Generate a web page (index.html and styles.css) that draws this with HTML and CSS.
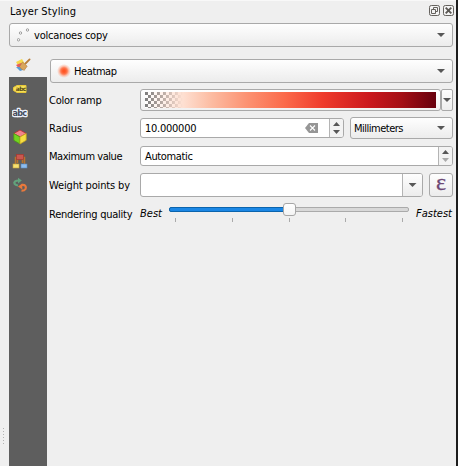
FILE: index.html
```
<!DOCTYPE html>
<html lang="en">
<head>
<meta charset="utf-8">
<title>Layer Styling</title>
<link rel="stylesheet" href="styles.css">
</head>
<body>
<div class="panel">
  <header class="titlebar">
    <h1 class="t-title">Layer Styling</h1>
    <svg class="winbtn" width="11" height="11" viewBox="0 0 11 11"><rect x=".5" y=".5" width="10" height="10" rx="1.8" fill="#f4f4f4" stroke="#65625e"/><path d="M4.5 4.5v-2h4v4h-2M2.5 4.5h4v4h-4z" fill="none" stroke="#65625e"/></svg>
    <svg class="winbtn" width="11" height="11" viewBox="0 0 11 11"><rect x=".5" y=".5" width="10" height="10" rx="1.8" fill="#f4f4f4" stroke="#65625e"/><path d="M2.7 2.7l5.6 5.6M8.3 2.7L2.7 8.3" stroke="#5b5854" stroke-width="1.9"/></svg>
  </header>
  <div class="combo layer">
    <svg class="points" width="14" height="14" viewBox="0 0 14 14" fill="#fff" stroke="#888" stroke-width=".8"><circle cx="3.5" cy="5" r="1.2"/><circle cx="10.500" cy="2" r="1.2"/><circle cx="1.500" cy="11.800" r="1.2"/></svg>
    <span class="t-layer">volcanoes copy</span><i class="arrow"></i>
  </div>
  <div class="body">
    <nav class="tabs">
      <div class="tab active"><svg width="16" height="16" viewBox="0 0 16 16"><path d="M1 5l6-3 3 5-6 3z" fill="#f6d84b"/><path d="M1 8l5-2 4 4-5 3z" fill="#e45c61"/><path d="M1 10l4 0 3 3-3 1z" fill="#5b9bd5"/><path d="M14.600 2.400L10.500 6.500" stroke="#b97e3b" stroke-width="1.800" stroke-linecap="round"/><path d="M7.500 5l4.700 4.200-3.200 4.300-1-1.300-.8.500-2.700-3z" fill="#d9a55c" stroke="#ae7a3b" stroke-width=".6"/></svg></div>
      <div class="tab"><svg width="16" height="16" viewBox="0 0 16 16"><path d="M5 4.500h9v7H5L1.500 9.500v-3z" fill="#f5df5a" stroke="#e8c837"/><text x="3.800" y="10" class="abc">abc</text></svg></div>
      <div class="tab"><svg width="16" height="16" viewBox="0 0 16 16"><text x=".6" y="10.800" class="abc halo">abc</text></svg></div>
      <div class="tab"><svg width="16" height="16" viewBox="0 0 16 16" stroke-width=".8" stroke-linejoin="round"><path d="M8 1l6.200 3.500L8 8 1.800 4.500z" fill="#f2848b" stroke="#c32832"/><path d="M1.800 4.500L8 8v7l-6.200-3.700z" fill="#73d321" stroke="#4c9a15"/><path d="M14.200 4.500L8 8v7l6.200-3.700z" fill="#f6de42" stroke="#c5a620"/></svg></div>
      <div class="tab"><svg width="16" height="16" viewBox="0 0 16 16"><path d="M5 4.500H3.500V11M11 4.500h1.500V11M5.500 6v4M10.500 6v4" fill="none" stroke="#b8742e" stroke-width="1.500"/><rect x="4.500" y="1.500" width="7" height="5" fill="#c9584f" stroke="#a9372f" stroke-width=".7"/><rect x="1" y="11" width="6" height="4" fill="#f6e173" stroke="#c6a638" stroke-width=".6"/><rect x="9" y="11" width="6" height="4" fill="#8dbdee" stroke="#5c8dc0" stroke-width=".6"/></svg></div>
      <div class="tab"><svg width="16" height="16" viewBox="0 0 16 16" fill="none"><path d="M6 8.500C2.500 8 1.500 6 3 4.500c1-1 2.500-1 4-1" stroke="#62a37c" stroke-width="2.200"/><path d="M6 .8L9.800 3.500 6 6.500z" fill="#62a37c"/><path d="M9.500 8c4-.5 5 1.500 4 4-1 1.500-2 1.800-4 1.700" stroke="#e8793c" stroke-width="2.200"/><path d="M10.300 6.500L6 9.500l4.300 3z" fill="#e8793c"/></svg></div>
    </nav>
    <main class="form">
      <div class="combo renderer"><i class="heat"></i><span class="t-heat">Heatmap</span><i class="arrow"></i></div>
      <div class="row ramp-row">
        <label class="t-ramp">Color ramp</label>
        <div class="ramp"><div class="ramp-fill"></div></div>
        <div class="ramp-menu"><i class="arrow"></i></div>
      </div>
      <div class="row radius-row">
        <label class="t-radius">Radius</label>
        <div class="field radius"><span class="t-num">10.000000</span>
          <svg class="clear" width="13" height="10" viewBox="0 0 13 10"><path d="M4 0h9v10H4L0 5z" fill="#969696"/><path d="M5 2.500l5 5M10 2.500l-5 5" stroke="#fff" stroke-width="1.100"/></svg>
          <div class="spin"><i class="up"></i><i class="down"></i></div></div>
        <div class="combo units"><span class="t-mm">Millimeters</span><i class="arrow"></i></div>
      </div>
      <div class="row max-row">
        <label class="t-max">Maximum value</label>
        <div class="field"><span class="t-auto">Automatic</span><div class="spin"><i class="up"></i><i class="down dim"></i></div></div>
      </div>
      <div class="row weight-row">
        <label class="t-weight">Weight points by</label>
        <div class="field weight"><div class="drop"><i class="arrow"></i></div></div>
        <div class="expr">ε</div>
      </div>
      <div class="row quality-row">
        <label class="t-quality">Rendering quality</label>
        <em class="t-best">Best</em>
        <div class="slider">
          <div class="track"><div class="done"></div><div class="knob"></div></div>
          <div class="ticks"><i></i><i></i><i></i><i></i><i></i></div>
        </div>
        <em class="t-fast">Fastest</em>
      </div>
    </main>
  </div>
  <div class="grip"></div>
</div>
</body>
</html>
```
FILE: styles.css
```
* { box-sizing: border-box; }
html, body { margin: 0; height: 466px; overflow: hidden; }
body { font: 11px/16px "DejaVu Sans Condensed", "DejaVu Sans", sans-serif; font-stretch: condensed; color: #000; background: #efefef; }
.panel { position: relative; display: flex; flex-direction: column; width: 458px; height: 466px; border-right: 2px solid #1d1d1d; background: #efefef; padding: 0 3px 0 9px; box-shadow: inset 0 1px #f8f8f8; }
.titlebar { display: flex; align-items: center; height: 23px; padding: 0 0 2px 1px; gap: 3px; }
h1 { flex: 1; margin: 0; padding-top: 2px; font: inherit; }
.winbtn { flex: none; }
.titlebar .winbtn:last-child { margin-right: -1px; }
span, label, em, h1 { white-space: nowrap; }
.t-title { letter-spacing: .1px; }
.t-layer { letter-spacing: -.2px; }
.t-heat { letter-spacing: -.4px; }
.t-ramp, .t-num, .t-quality { letter-spacing: -.25px; }
.t-mm { letter-spacing: -.5px; }
.t-max { letter-spacing: -.45px; }
.t-weight { letter-spacing: -.15px; }
.t-auto { letter-spacing: -.35px; }
.combo { display: flex; align-items: center; height: 24px; border: 1px solid #a9a9a9; border-radius: 3px; background: linear-gradient(#fefefe, #ececec); }
.combo .arrow { margin-left: auto; margin-right: 7px; }
.layer { flex: none; width: 444px; padding-left: 7px; }
.layer span { margin-left: 3px; }
.combo span { padding-top: 2px; }
.field span { padding-top: 2px; }
.row label { padding-top: 2px; }
.arrow { flex: none; width: 8px; height: 4px; background: #575757; clip-path: polygon(0 0, 100% 0, 50% 100%); }
.body { display: flex; flex: 1; min-height: 0; }
.tabs { width: 38px; margin-top: 8px; background: #5e5e5e; }
.tab { display: flex; justify-content: center; align-items: center; height: 24px; padding-right: 16px; }
.tab.active { height: 22px; background: #efefef; padding: 0 10px 2px 0; }
.abc { font: bold 6px "DejaVu Sans", sans-serif; fill: #574b16; letter-spacing: -.7px; }
.abc.halo { font-size: 8px; fill: #454c5e; stroke: #eef2fc; stroke-width: 2.5px; paint-order: stroke; stroke-linejoin: round; }
.form { flex: 1; padding: 12px 0 0 3px; min-width: 0; }
.heat { width: 14px; height: 14px; margin-left: 6px; margin-right: 3px; background: radial-gradient(circle, #ff5524 0 12%, #ff7850 32%, rgba(255,150,115,.5) 50%, transparent 70%); }
.row { display: flex; align-items: center; }
.row label { width: 90px; margin-left: -1px; flex: none; margin-right: 1px; }
.ramp-row { height: 22px; margin-top: 6px; }
.ramp { flex: 1; height: 22px; border: 1px solid #a9a9a9; border-radius: 3px; padding: 2px 4px 2px 4px; background: linear-gradient(#fff, #f1f1f1); }
.ramp-fill { height: 16px; background: linear-gradient(90deg, rgba(255,245,240,0), #fee0d2 13%, #fcbba1 23%, #fc9272 35%, #fb6a4a 48%, #ef3b2c 61%, #cb181d 77%, #a50f15 88%, #67000d), repeating-conic-gradient(#fff 0 25%, #7d7d7d 0 50%) 0 0 / 6px 6px; }
.ramp-menu { display: flex; justify-content: center; align-items: center; width: 12px; height: 22px; border: 1px solid #a9a9a9; border-radius: 2px; background: linear-gradient(#fefefe, #ededed); }
.radius-row { height: 22px; margin-top: 6px; }
.field { display: flex; flex: 1; align-items: center; height: 20px; border: 1px solid #a9a9a9; border-radius: 3px; background: #fff; padding-left: 4px; overflow: hidden; }
.field.radius { flex: none; width: 204px; }
.clear { margin-left: auto; margin-right: 11px; }
.spin { display: flex; flex-direction: column; align-items: center; justify-content: center; gap: 4px; width: 14px; height: 18px; border-left: 1px solid #b4b4b4; background: #f3f3f3; margin-left: auto; }
.clear + .spin { margin-left: 0; }
.up, .down { width: 7px; height: 4px; background: #575757; clip-path: polygon(50% 0, 100% 100%, 0 100%); }
.down { clip-path: polygon(0 0, 100% 0, 50% 100%); }
.dim { background: #aaa; }
.units { width: 103px; height: 22px; margin-left: 6px; padding-left: 3px; }
.max-row { height: 20px; margin-top: 7px; }
.weight-row { height: 24px; margin-top: 7px; }
.field.weight { height: 24px; }
.drop { display: flex; align-items: center; justify-content: center; margin-left: auto; width: 20px; height: 22px; border-left: 1px solid #b4b4b4; background: linear-gradient(#fefefe, #ececec); }
.expr { width: 24px; height: 24px; margin-left: 6px; border: 1px solid #a9a9a9; border-radius: 3px; background: linear-gradient(#fefefe, #ececec); color: #6c4875; font: 24px/17px "Liberation Serif", serif; -webkit-text-stroke: .3px #6c4875; text-align: center; }
.quality-row { height: 22px; margin-top: 5px; align-items: flex-start; padding-top: 4px; }
.quality-row label { padding-top: 1px; }
.quality-row em { flex: none; }
.t-best { width: 29px; }
.slider { width: 240px; margin-top: 1px; flex: none; }
.track { position: relative; height: 5px; border: 1px solid #aaa; border-radius: 2px; background: #d8d8d8; }
.done { width: 120px; height: 5px; margin: -1px; border: 1px solid #0b64ad; border-radius: 2px; background: #1b87e5; }
.knob { position: absolute; left: 113px; top: -5px; width: 13px; height: 13px; border: 1px solid #a6a6a6; border-radius: 3px; background: linear-gradient(#fff, #f3f3f3); }
.ticks { display: flex; justify-content: space-between; padding: 0 6px; margin-top: 6px; }
.ticks i { width: 1px; height: 4px; background: #aaa; }
.t-fast { margin-left: 7px; }
.grip { position: absolute; left: 3px; top: 428px; width: 1px; height: 16px; background: repeating-linear-gradient(#b3b3b3 0 1px, transparent 1px 3px); }
```
